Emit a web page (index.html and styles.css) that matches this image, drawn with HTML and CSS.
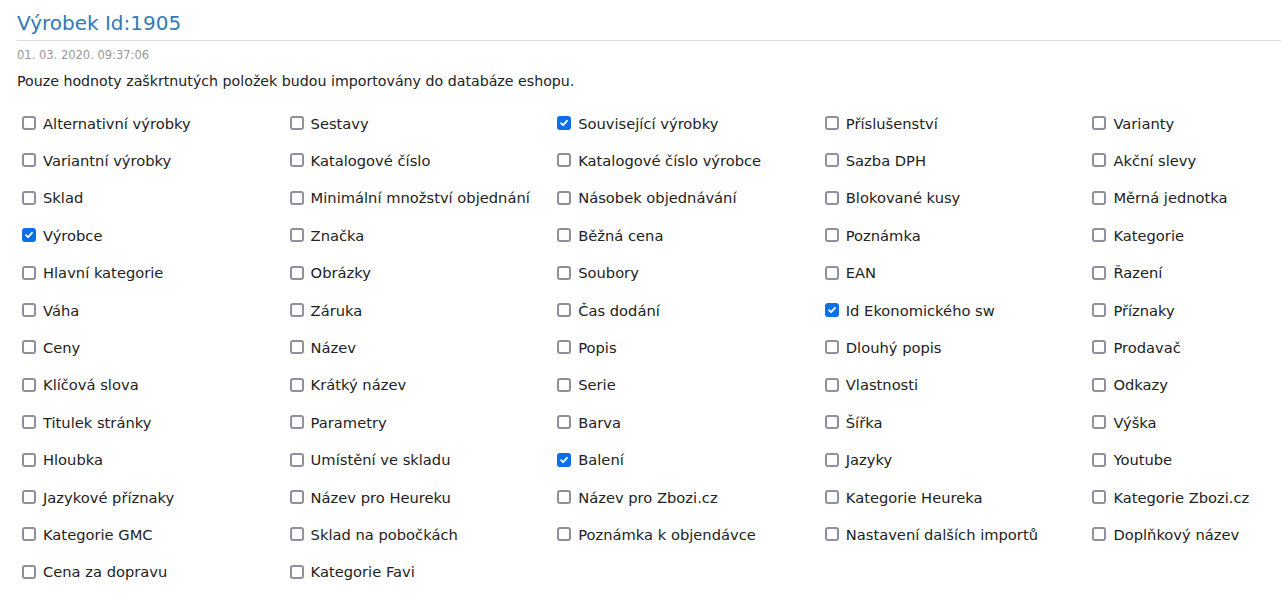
FILE: index.html
```html
<!DOCTYPE html>
<html lang="cs">
<head>
    <meta charset="UTF-8">
    <title>Výrobek Id:1905</title>
    <link rel="stylesheet" href="styles.css">
</head>
<body>
    <div class="page">
        <h1 class="title">Výrobek Id:1905</h1>
        <div class="date">01. 03. 2020. 09:37:06</div>
        <p class="note">Pouze hodnoty zaškrtnutých položek budou importovány do databáze eshopu.</p>

        <div class="fields">
            <label class="field"><input type="checkbox"> Alternativní výrobky</label>
            <label class="field"><input type="checkbox"> Sestavy</label>
            <label class="field"><input type="checkbox" checked> Související výrobky</label>
            <label class="field"><input type="checkbox"> Příslušenství</label>
            <label class="field"><input type="checkbox"> Varianty</label>

            <label class="field"><input type="checkbox"> Variantní výrobky</label>
            <label class="field"><input type="checkbox"> Katalogové číslo</label>
            <label class="field"><input type="checkbox"> Katalogové číslo výrobce</label>
            <label class="field"><input type="checkbox"> Sazba DPH</label>
            <label class="field"><input type="checkbox"> Akční slevy</label>

            <label class="field"><input type="checkbox"> Sklad</label>
            <label class="field"><input type="checkbox"> Minimální množství objednání</label>
            <label class="field"><input type="checkbox"> Násobek objednávání</label>
            <label class="field"><input type="checkbox"> Blokované kusy</label>
            <label class="field"><input type="checkbox"> Měrná jednotka</label>

            <label class="field"><input type="checkbox" checked> Výrobce</label>
            <label class="field"><input type="checkbox"> Značka</label>
            <label class="field"><input type="checkbox"> Běžná cena</label>
            <label class="field"><input type="checkbox"> Poznámka</label>
            <label class="field"><input type="checkbox"> Kategorie</label>

            <label class="field"><input type="checkbox"> Hlavní kategorie</label>
            <label class="field"><input type="checkbox"> Obrázky</label>
            <label class="field"><input type="checkbox"> Soubory</label>
            <label class="field"><input type="checkbox"> EAN</label>
            <label class="field"><input type="checkbox"> Řazení</label>

            <label class="field"><input type="checkbox"> Váha</label>
            <label class="field"><input type="checkbox"> Záruka</label>
            <label class="field"><input type="checkbox"> Čas dodání</label>
            <label class="field"><input type="checkbox" checked> Id Ekonomického sw</label>
            <label class="field"><input type="checkbox"> Příznaky</label>

            <label class="field"><input type="checkbox"> Ceny</label>
            <label class="field"><input type="checkbox"> Název</label>
            <label class="field"><input type="checkbox"> Popis</label>
            <label class="field"><input type="checkbox"> Dlouhý popis</label>
            <label class="field"><input type="checkbox"> Prodavač</label>

            <label class="field"><input type="checkbox"> Klíčová slova</label>
            <label class="field"><input type="checkbox"> Krátký název</label>
            <label class="field"><input type="checkbox"> Serie</label>
            <label class="field"><input type="checkbox"> Vlastnosti</label>
            <label class="field"><input type="checkbox"> Odkazy</label>

            <label class="field"><input type="checkbox"> Titulek stránky</label>
            <label class="field"><input type="checkbox"> Parametry</label>
            <label class="field"><input type="checkbox"> Barva</label>
            <label class="field"><input type="checkbox"> Šířka</label>
            <label class="field"><input type="checkbox"> Výška</label>

            <label class="field"><input type="checkbox"> Hloubka</label>
            <label class="field"><input type="checkbox"> Umístění ve skladu</label>
            <label class="field"><input type="checkbox" checked> Balení</label>
            <label class="field"><input type="checkbox"> Jazyky</label>
            <label class="field"><input type="checkbox"> Youtube</label>

            <label class="field"><input type="checkbox"> Jazykové příznaky</label>
            <label class="field"><input type="checkbox"> Název pro Heureku</label>
            <label class="field"><input type="checkbox"> Název pro Zbozi.cz</label>
            <label class="field"><input type="checkbox"> Kategorie Heureka</label>
            <label class="field"><input type="checkbox"> Kategorie Zbozi.cz</label>

            <label class="field"><input type="checkbox"> Kategorie GMC</label>
            <label class="field"><input type="checkbox"> Sklad na pobočkách</label>
            <label class="field"><input type="checkbox"> Poznámka k objendávce</label>
            <label class="field"><input type="checkbox"> Nastavení dalších importů</label>
            <label class="field"><input type="checkbox"> Doplňkový název</label>

            <label class="field"><input type="checkbox"> Cena za dopravu</label>
            <label class="field"><input type="checkbox"> Kategorie Favi</label>
        </div>
    </div>
</body>
</html>
```

FILE: styles.css
```css
body {
    margin: 0;
    font-family: "DejaVu Sans", Verdana, sans-serif;
    font-size: 14px;
    color: #222;
    background: #fff;
    overflow: hidden;
}

.page {
    padding: 8px 0 0 17px;
}

.title {
    font-size: 20px;
    font-weight: normal;
    color: #337ab7;
    margin: 0;
    padding: 3px 0 5px;
    border-bottom: 1px solid #ddd;
}

.date {
    font-size: 11.5px;
    color: #999;
    margin-top: 7px;
}

.note {
    font-size: 14.2px;
    margin: 11px 0 24px;
}

.fields {
    display: grid;
    grid-template-columns: repeat(5, 267.6px);
    grid-auto-rows: 37.42px;
    font-size: 14.7px;
}

.field {
    display: flex;
    align-items: center;
    height: 20px;
    white-space: nowrap;
}

.field input {
    appearance: none;
    -webkit-appearance: none;
    box-sizing: border-box;
    width: 14px;
    height: 14px;
    margin: 0 7px 0 5px;
    border: 2px solid #8f8f9d;
    border-radius: 3px;
    background: #fff;
    flex-shrink: 0;
}

.field input:checked {
    border-color: #0c6ee8;
    background: #0c6ee8 url("data:image/svg+xml,%3Csvg xmlns='http://www.w3.org/2000/svg' viewBox='0 0 10 10'%3E%3Cpath d='M2 5.2 4.1 7.2 8 2.8' fill='none' stroke='white' stroke-width='1.8' stroke-linecap='round' stroke-linejoin='round'/%3E%3C/svg%3E") center / 10px 10px no-repeat;
}
```
